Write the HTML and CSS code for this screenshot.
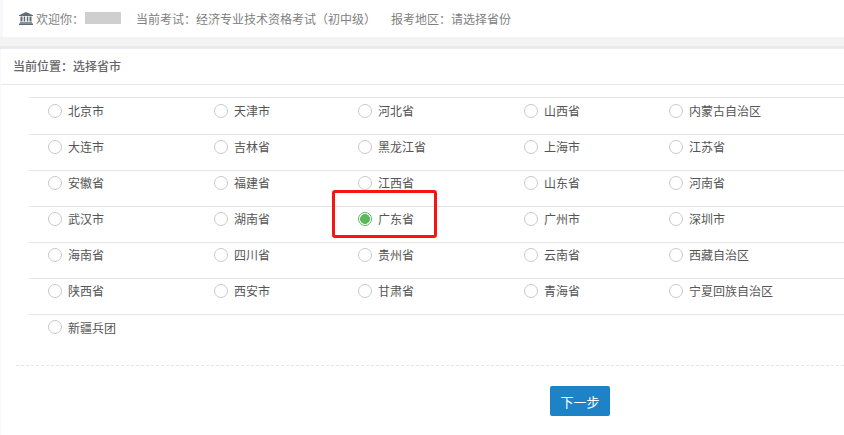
FILE: index.html
```html
<!DOCTYPE html>
<html lang="zh">
<head>
<meta charset="utf-8">
<title>选择省市</title>
<link rel="stylesheet" href="styles.css">
</head>
<body>
<header class="topbar">
  <svg class="bank" viewBox="0 0 14 13" width="14" height="13"><path d="M7 0 L14 3.2 V4 H0 V3.2 Z M1.5 4.6 H3.5 V9.6 H1.5 Z M4.7 4.6 H6.2 V9.6 H4.7 Z M7.8 4.6 H9.3 V9.6 H7.8 Z M10.5 4.6 H12.5 V9.6 H10.5 Z M1 10.2 H13 V11.2 H1 Z M0 11.6 H14 V13 H0 Z" fill="#5f6b76"/></svg>
  <span class="welcome">欢迎你：</span>
  <span class="mask"></span>
  <span class="exam">当前考试：经济专业技术资格考试（初中级）</span>
  <span class="area">报考地区：请选择省份</span>
</header>
<div class="band"></div>
<main class="panel">
  <div class="crumb">当前位置：选择省市</div>
  <div class="table-wrap">
    <div class="grid">
      <label class="cell"><i class="radio"></i>北京市</label>
      <label class="cell"><i class="radio"></i>天津市</label>
      <label class="cell"><i class="radio"></i>河北省</label>
      <label class="cell"><i class="radio"></i>山西省</label>
      <label class="cell"><i class="radio"></i>内蒙古自治区</label>
      <label class="cell"><i class="radio"></i>大连市</label>
      <label class="cell"><i class="radio"></i>吉林省</label>
      <label class="cell"><i class="radio"></i>黑龙江省</label>
      <label class="cell"><i class="radio"></i>上海市</label>
      <label class="cell"><i class="radio"></i>江苏省</label>
      <label class="cell"><i class="radio"></i>安徽省</label>
      <label class="cell"><i class="radio"></i>福建省</label>
      <label class="cell"><i class="radio"></i>江西省</label>
      <label class="cell"><i class="radio"></i>山东省</label>
      <label class="cell"><i class="radio"></i>河南省</label>
      <label class="cell"><i class="radio"></i>武汉市</label>
      <label class="cell"><i class="radio"></i>湖南省</label>
      <label class="cell"><i class="radio checked"></i>广东省</label>
      <label class="cell"><i class="radio"></i>广州市</label>
      <label class="cell"><i class="radio"></i>深圳市</label>
      <label class="cell"><i class="radio"></i>海南省</label>
      <label class="cell"><i class="radio"></i>四川省</label>
      <label class="cell"><i class="radio"></i>贵州省</label>
      <label class="cell"><i class="radio"></i>云南省</label>
      <label class="cell"><i class="radio"></i>西藏自治区</label>
      <label class="cell"><i class="radio"></i>陕西省</label>
      <label class="cell"><i class="radio"></i>西安市</label>
      <label class="cell"><i class="radio"></i>甘肃省</label>
      <label class="cell"><i class="radio"></i>青海省</label>
      <label class="cell"><i class="radio"></i>宁夏回族自治区</label>
      <label class="cell"><i class="radio"></i>新疆兵团</label>
    </div>
    <div class="highlight"></div>
  </div>
  <div class="actions">
    <button class="next" type="button">下一步</button>
  </div>
</main>
</body>
</html>
```
FILE: styles.css
```css
* { box-sizing: border-box; }
html, body { margin: 0; padding: 0; }
body {
  width: 844px;
  height: 435px;
  overflow: hidden;
  background: #f7f8fa;
  font-family: "Noto Sans CJK SC", "Liberation Sans", sans-serif;
  font-size: 12px;
  color: #555;
}
.topbar {
  height: 37px;
  margin-left: 3px;
  padding: 0 0 1px 16px;
  display: flex;
  align-items: center;
  color: #808080;
  background: #fff;
}
.bank { flex: none; }
.welcome { margin-left: 3px; }
.mask {
  width: 36px;
  height: 12px;
  margin-left: 1px;
  background: #cfcfcf;
}
.exam { margin-left: 15px; }
.area { margin-left: 15px; }
.band {
  height: 12px;
  background: #f3f3f3;
  border-bottom: 3px solid #e7ebee;
}
.panel {
  height: 386px;
  margin-left: 1px;
  background: #fff;
}
.crumb {
  height: 36px;
  padding: 0 0 2px 12px;
  display: flex;
  align-items: center;
  font-weight: 500;
  color: #666;
  border-bottom: 1px solid #e8e8e8;
}
.table-wrap {
  position: relative;
  margin: 12px 0 0 28px;
}
.grid {
  display: grid;
  grid-template-columns: 185px 144px 166px 145px 175px;
  grid-auto-rows: 36px;
  padding-top: 1px;
  border-top: 1px solid #e4e4e4;
}
.cell {
  display: flex;
  align-items: center;
  padding: 0 0 12px 0;
  color: #555;
  border-bottom: 1px solid #e4e4e4;
}
.cell:nth-child(5n + 1) { padding-left: 19px; }
.cell:last-child { border-bottom: 0; }
.radio {
  flex: none;
  width: 14px;
  height: 14px;
  margin-right: 6px;
  border: 1px solid #c9c9c9;
  border-radius: 50%;
  background: #fff;
}
.radio.checked {
  border-color: #5cb85c;
  background: radial-gradient(circle, #5cb85c 0 4.6px, #fff 5.2px);
}
.highlight {
  position: absolute;
  left: 303px;
  top: 93px;
  width: 105px;
  height: 48px;
  border: 3px solid #f5160f;
  border-radius: 3px;
}
.actions {
  margin: 14px 0 0 15px;
  padding-top: 20px;
  border-top: 1px dashed #e6e6e6;
  padding-left: 534px;
}
.next {
  display: block;
  width: 60px;
  height: 30px;
  padding: 0;
  border: 0;
  border-radius: 2px;
  background: #1e83c6;
  color: #fff;
  font: inherit;
  font-size: 13px;
}
```
